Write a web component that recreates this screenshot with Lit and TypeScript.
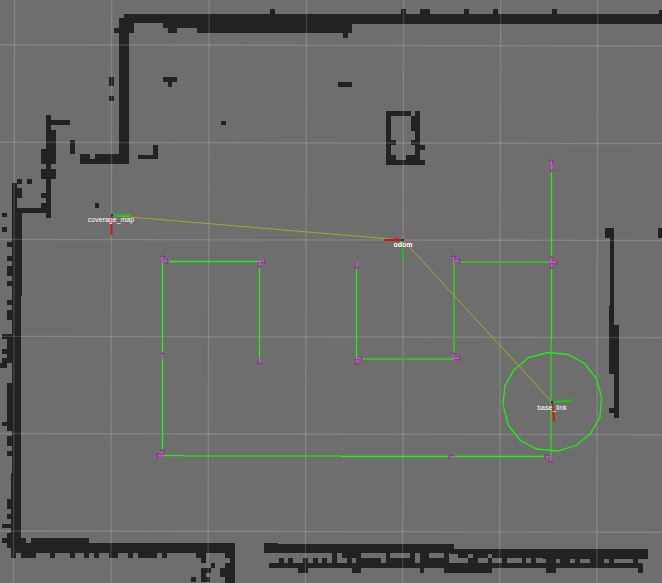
import { LitElement, css, html, svg } from "lit";
import { customElement } from "lit/decorators.js";

type Rect = [number, number, number, number];
type Line = [number, number, number, number];
type Dir = "up" | "down" | "left" | "right";

// Occupied cells of the map: x, y, width, height.
const WALLS: Rect[] = [
  // top wall
  [124, 14, 538, 9], [119, 18, 15, 15], [114, 28, 5, 5], [163, 23, 34, 5],
  [168, 28, 9, 5], [197, 23, 155, 10], [352, 14, 310, 10], [343, 33, 5, 5],
  [270, 9, 5, 5], [401, 9, 5, 5], [420, 9, 10, 5], [464, 9, 5, 5],
  [493, 9, 5, 5], [552, 9, 5, 5], [659, 10, 3, 4],
  // inner corner
  [119, 33, 10, 131], [80, 154, 10, 10], [90, 159, 5, 5], [95, 154, 34, 10],
  [153, 145, 5, 10], [138, 155, 20, 4],
  [109, 77, 5, 9], [109, 96, 5, 5], [163, 77, 14, 5], [168, 82, 4, 5],
  [221, 121, 5, 4], [338, 82, 14, 5], [95, 203, 4, 5],
  // box
  [386, 111, 5, 54], [386, 111, 25, 5], [415, 111, 5, 50], [411, 116, 4, 15],
  [411, 140, 4, 5], [391, 140, 5, 5], [420, 145, 5, 5], [391, 155, 5, 5],
  [406, 155, 14, 5], [386, 160, 39, 5],
  // left recess
  [46, 115, 5, 103], [51, 120, 19, 5], [51, 130, 5, 34], [41, 149, 5, 15],
  [41, 169, 15, 10], [70, 140, 5, 14], [41, 193, 5, 5], [41, 203, 5, 5],
  [17, 208, 34, 5], [17, 179, 5, 5], [27, 179, 5, 5], [17, 188, 5, 10],
  // left wall
  [12, 183, 5, 25], [12, 208, 10, 88], [12, 296, 9, 177], [11, 473, 10, 80],
  [2, 213, 5, 4], [2, 227, 5, 5], [7, 242, 5, 5], [7, 256, 5, 5],
  [7, 266, 5, 10], [7, 281, 5, 5], [7, 300, 5, 5], [7, 310, 5, 10],
  [2, 334, 10, 5], [7, 339, 5, 24], [2, 349, 5, 5], [2, 358, 5, 5],
  [0, 363, 7, 5], [7, 383, 5, 48], [2, 422, 5, 4], [7, 436, 5, 10],
  [7, 451, 5, 5], [7, 499, 5, 10], [7, 514, 5, 5], [2, 524, 9, 4],
  [7, 533, 5, 15], [2, 538, 5, 5],
  // bottom left wall
  [11, 543, 224, 10], [21, 538, 5, 5], [31, 538, 58, 5], [11, 553, 5, 5],
  [21, 553, 15, 5], [50, 553, 5, 5], [70, 553, 5, 5], [84, 553, 5, 5],
  [94, 553, 5, 5], [109, 553, 9, 5], [128, 553, 5, 5], [138, 553, 19, 5],
  [162, 553, 5, 5], [196, 553, 10, 5], [201, 558, 5, 5], [230, 543, 5, 40],
  [225, 553, 5, 5], [220, 568, 10, 9], [225, 563, 5, 20], [211, 563, 4, 5],
  [201, 568, 10, 5], [201, 573, 5, 9], [201, 577, 9, 5], [191, 577, 5, 5],
  // bottom right wall
  [264, 543, 14, 10], [264, 544, 190, 9], [269, 563, 373, 5], [638, 564, 5, 9],
  [444, 568, 48, 5], [546, 568, 10, 5], [420, 568, 4, 5], [352, 568, 9, 5],
  [298, 568, 10, 5], [279, 558, 5, 5], [288, 558, 5, 5], [303, 558, 5, 5],
  [313, 558, 5, 5], [322, 558, 5, 5], [332, 553, 5, 10], [342, 553, 19, 5],
  [347, 558, 5, 5], [356, 558, 25, 5], [386, 553, 4, 10], [390, 558, 25, 5],
  [410, 553, 5, 5], [420, 553, 9, 10], [429, 558, 15, 5], [444, 553, 5, 15],
  [450, 549, 198, 5], [458, 549, 10, 9], [473, 554, 15, 4], [492, 554, 156, 4],
  [543, 558, 105, 1], [468, 558, 10, 5], [488, 558, 4, 5], [502, 558, 5, 5],
  [522, 558, 4, 5], [531, 558, 5, 5], [546, 558, 10, 5], [560, 558, 10, 5],
  [575, 558, 5, 5], [590, 558, 14, 5], [609, 558, 5, 5], [633, 558, 5, 5],
  // right wall
  [605, 228, 9, 10], [610, 238, 4, 68], [609, 306, 5, 19], [609, 325, 10, 49],
  [614, 374, 5, 44], [609, 408, 5, 5], [658, 228, 4, 10],
];

// One metre cells, the camera being turned by a hair.
const GRID: Line[] = [
  [14.6, 0, 13.4, 583], [111.7, 0, 110.9, 583], [209.2, 0, 208.1, 583],
  [306.5, 0, 305.4, 583], [403.6, 0, 402.6, 583], [500.6, 0, 499.6, 583],
  [597.7, 0, 596.8, 583],
  [0, 44.7, 662, 46], [0, 142.2, 662, 143.5], [0, 239.4, 662, 240.6],
  [0, 336.4, 662, 337.6], [0, 433.5, 662, 434.7], [0, 531, 662, 532.2],
];

const PATH_SHARP: Line[] = [
  [551.5, 160, 551.5, 340], [356.5, 264, 356.5, 359], [162.5, 261, 162.5, 456],
  [162, 261.5, 260, 261.5], [259.5, 261, 259.5, 362], [162, 455.5, 184, 455.5],
  [341, 456.5, 551, 456.5],
];
const PATH_SOFT: Line[] = [
  [551, 340, 551, 457], [454, 262, 551, 262], [454, 262, 454, 358],
  [357, 359, 454, 359], [184, 456, 341, 456],
];

const POSES: [number, number, Dir][] = [
  [162, 261, "up"], [162, 261, "right"], [259, 261, "right"], [259, 261, "down"],
  [259, 358, "down"], [162, 358, "up"], [162, 455, "up"], [162, 455, "left"],
  [454, 456, "left"], [550, 456, "left"], [550, 456, "down"],
  [356, 262, "down"], [356, 358, "down"], [356, 358, "right"],
  [453, 358, "up"], [454, 358, "right"], [453, 261, "up"], [454, 261, "right"],
  [551, 262, "up"], [551, 262, "down"], [551, 262, "right"],
  [551, 165, "up"], [551, 165, "down"],
];

const TURN: Record<Dir, number> = { right: 0, down: 90, left: 180, up: 270 };

const ROBOT =
  "548,352.5 568,354.5 584.5,363.5 596.5,378.5 601.5,397.5 600,417 590.5,433.5 " +
  "576,445.5 557.5,451 536.5,449 520.5,440.5 508.5,425.5 503,404.5 505,385.5 " +
  "514,370 528.5,357.5";

const line = (name: string) => ([x1, y1, x2, y2]: Line) =>
  svg`<line class=${name} x1=${x1} y1=${y1} x2=${x2} y2=${y2}></line>`;

const pose = ([x, y, dir]: [number, number, Dir]) => svg`
  <g transform="translate(${x + 0.5} ${y + 0.5}) rotate(${TURN[dir]})">
    <path class="head" d="M0 1H5M5 -2.5V2.5M5 0H6.5"></path>
    <path class="shaft" d="M-0.5 0H5"></path>
  </g>`;

@customElement("app-root")
export class AppRoot extends LitElement {
  static styles = css`
    :host {
      display: block;
      min-height: 100vh;
      background: #6e6e6e;
    }
    .map {
      display: block;
      width: 100%;
      height: auto;
    }
    .wall {
      fill: #222;
      shape-rendering: crispEdges;
    }
    .grid {
      stroke: #fff;
      stroke-opacity: 0.15;
      stroke-width: 1.4;
    }
    .sharp {
      stroke: #21f206;
      stroke-width: 1.3;
    }
    .soft {
      stroke: #40b72d;
      stroke-width: 2;
    }
    .robot {
      fill: none;
      stroke: #1cf20d;
      stroke-width: 1.3;
    }
    .shaft {
      stroke: #e544e5;
      stroke-width: 1.5;
    }
    .head {
      fill: none;
      stroke: #7c2b7c;
      stroke-opacity: 0.85;
    }
    .link {
      stroke: #a9a233;
    }
    .tip {
      fill: #de1c66;
    }
    .x-axis {
      stroke: #c91a1a;
      stroke-width: 2;
    }
    .y-axis {
      stroke: #10c810;
      stroke-width: 2;
    }
    .origin {
      fill: #1616e0;
    }
    .label {
      fill: #fff;
      font-family: "Liberation Sans", Arial, sans-serif;
      font-size: 7px;
      text-anchor: middle;
    }
    .strong {
      font-weight: bold;
    }
  `;

  render() {
    return html`
      <svg class="map" viewBox="0 0 662 583" role="img" aria-label="coverage_map">
        ${WALLS.map(
          ([x, y, w, h]) =>
            svg`<rect class="wall" x=${x} y=${y} width=${w} height=${h}></rect>`,
        )}
        ${GRID.map(line("grid"))}
        ${PATH_SHARP.map(line("sharp"))}
        ${PATH_SOFT.map(line("soft"))}
        <polygon class="robot" points=${ROBOT}></polygon>
        ${POSES.map(pose)}

        <line class="link" x1="112" y1="215.5" x2="403" y2="240"></line>
        <line class="link" x1="403" y1="240" x2="552" y2="402"></line>
        <path class="tip" d="M394 237L402 240L394 241Z"></path>
        <path class="tip" d="M404 242L410 244L407 248Z"></path>

        <line class="x-axis" x1="111.5" y1="216" x2="111.5" y2="235"></line>
        <line class="y-axis" x1="113" y1="215" x2="131" y2="215"></line>
        <rect class="origin" x="111" y="214" width="2" height="2"></rect>

        <line class="x-axis" x1="384" y1="240" x2="402" y2="240"></line>
        <line class="y-axis" x1="403" y1="241" x2="403" y2="259"></line>
        <rect class="origin" x="402" y="239" width="2" height="2"></rect>

        <line class="x-axis" x1="552.5" y1="403" x2="554" y2="421"></line>
        <line class="y-axis" x1="553" y1="402" x2="572" y2="400.5"></line>
        <rect class="origin" x="551" y="401" width="2" height="2"></rect>

        <text class="label" x="111" y="222">coverage_map</text>
        <text class="label strong" x="403" y="247">odom</text>
        <text class="label" x="552" y="410">base_link</text>
      </svg>
    `;
  }
}
